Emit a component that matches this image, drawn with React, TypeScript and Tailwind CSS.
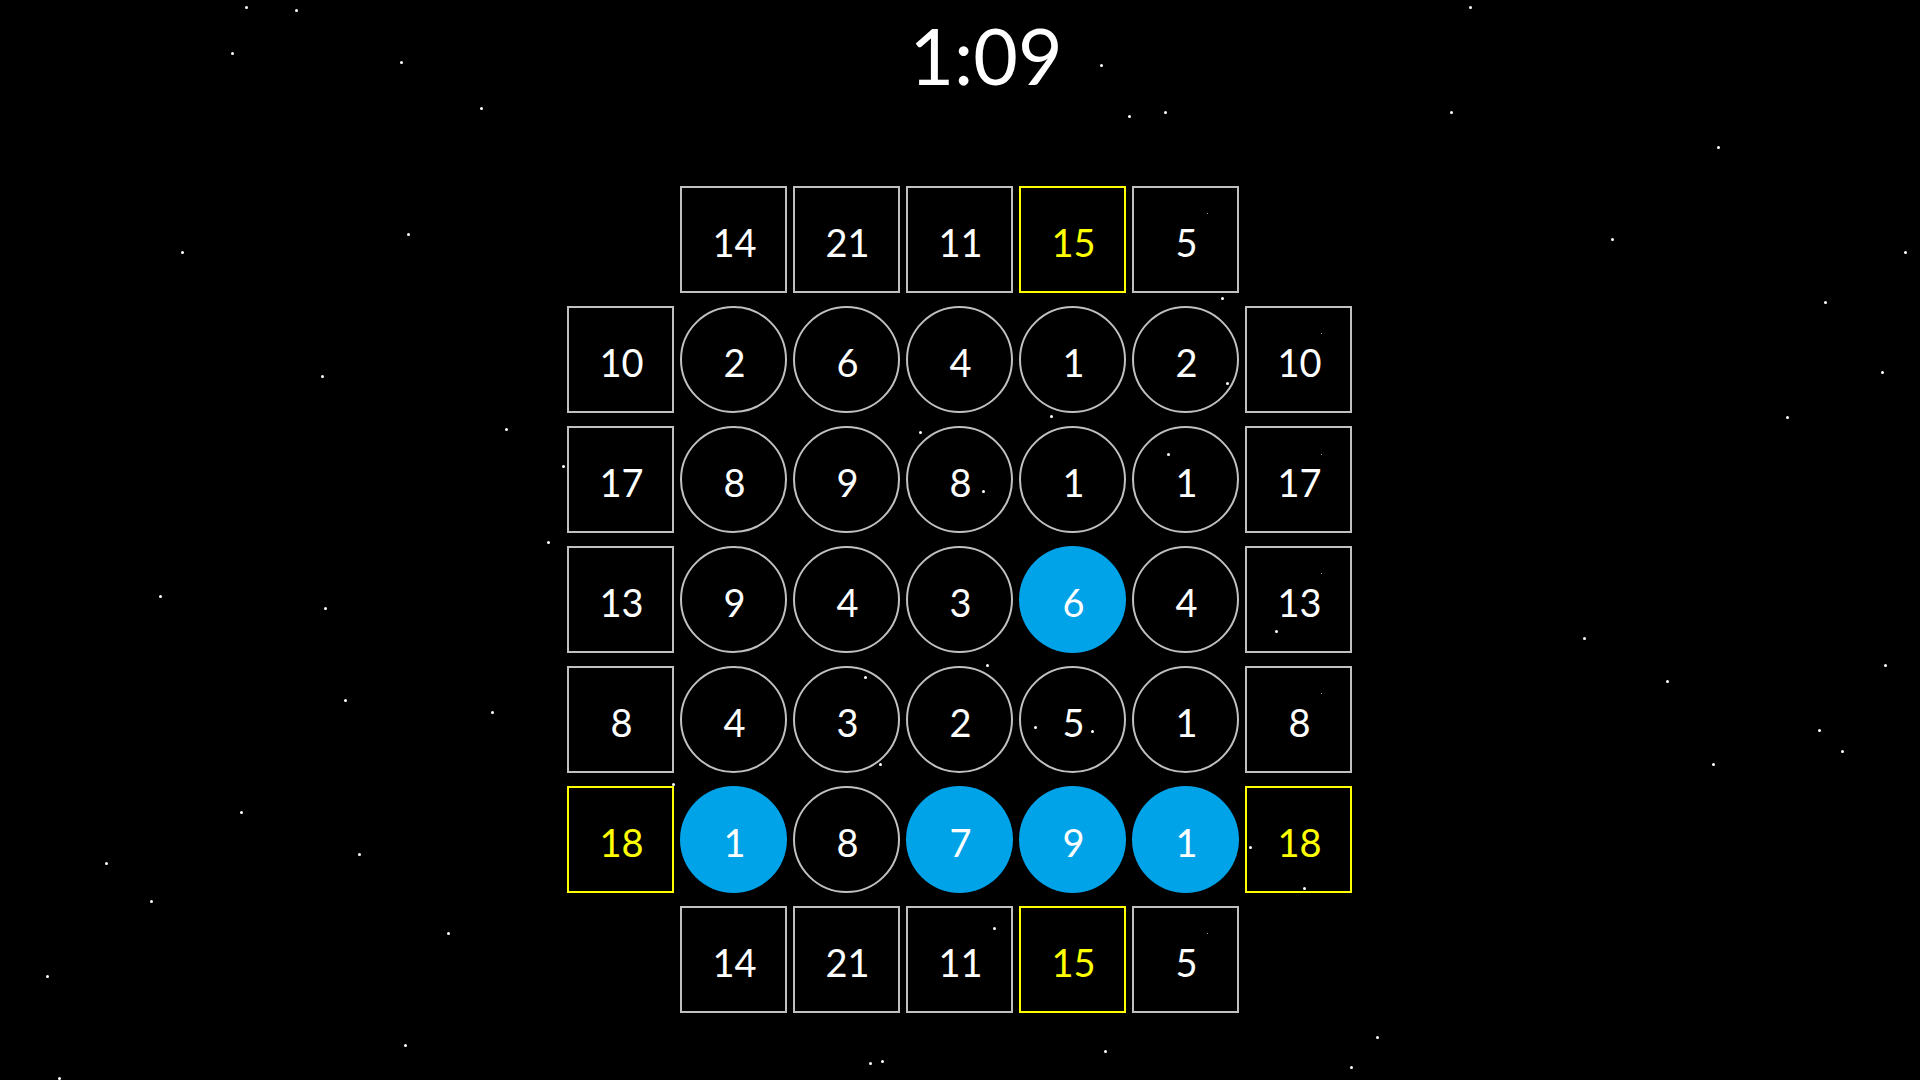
import React from 'react'

type Cell = { v?: number; kind: 'empty' | 'box' | 'ring' | 'filled'; hot?: boolean }

const box = (v: number, hot = false): Cell => ({ v, kind: 'box', hot })
const ring = (v: number): Cell => ({ v, kind: 'ring' })
const fill = (v: number): Cell => ({ v, kind: 'filled' })
const empty: Cell = { kind: 'empty' }

const rows: Cell[][] = [
  [empty, box(14), box(21), box(11), box(15, true), box(5), empty],
  [box(10), ring(2), ring(6), ring(4), ring(1), ring(2), box(10)],
  [box(17), ring(8), ring(9), ring(8), ring(1), ring(1), box(17)],
  [box(13), ring(9), ring(4), ring(3), fill(6), ring(4), box(13)],
  [box(8), ring(4), ring(3), ring(2), ring(5), ring(1), box(8)],
  [box(18, true), fill(1), ring(8), fill(7), fill(9), fill(1), box(18, true)],
  [empty, box(14), box(21), box(11), box(15, true), box(5), empty],
]

// star field, pixel positions on the 1920x1080 canvas
const stars: [number, number][] = [
  [246, 7], [296, 10], [232, 53], [401, 62], [481, 108], [408, 234], [182, 252], [322, 376], [506, 429], [548, 542],
  [160, 596], [325, 608], [345, 700], [492, 712], [241, 812], [106, 863], [151, 901], [359, 854], [448, 933], [47, 976],
  [405, 1045], [59, 1078], [1470, 7], [1451, 112], [1718, 147], [1612, 239], [1905, 252], [1825, 302], [1882, 372],
  [1787, 417], [1584, 638], [1667, 681], [1819, 730], [1842, 751], [1713, 764], [1885, 665], [1377, 1037],
  [1101, 65], [1129, 116], [1165, 112], [1222, 298], [1227, 383], [1051, 416], [920, 432], [983, 491], [1168, 454],
  [563, 466], [1276, 631], [987, 665], [865, 677], [880, 764], [1035, 727], [1092, 731], [673, 784], [1250, 847],
  [1304, 888], [994, 928], [1105, 1051], [870, 1063], [882, 1061], [1351, 1067],
]

const faint: [number, number][] = [
  [1321, 333], [1321, 454], [1207, 213], [1321, 573], [1321, 693], [1207, 933],
]

function GridCell({ cell }: { cell: Cell }) {
  if (cell.kind === 'empty') return <div />
  const base = 'w-[107px] h-[107px] flex items-center justify-center text-[38px] leading-none pt-[4px] pl-[2px]'
  if (cell.kind === 'box') {
    return (
      <div
        className={`${base} bg-black border-2 ${cell.hot ? 'border-[#ffff00] text-[#ffff00]' : 'border-[#c0c0c0] text-white'}`}
      >
        {cell.v}
      </div>
    )
  }
  if (cell.kind === 'ring') {
    return <div className={`${base} rounded-full bg-black border-2 border-[#c0c0c0] text-white`}>{cell.v}</div>
  }
  return <div className={`${base} rounded-full bg-[#00a2e8] text-white`}>{cell.v}</div>
}

export default function App() {
  return (
    <div
      className="relative w-[1920px] h-[1080px] overflow-hidden bg-black"
      style={{ fontFamily: 'Lato, "Open Sans", sans-serif' }}
    >
      <div className="flex flex-col items-center">
        <div className="h-[186px] pt-[17px] pl-[52px]">
          <div className="text-[77px] leading-none text-white">1:09</div>
        </div>

        <div className="grid grid-cols-[repeat(7,107px)] auto-rows-[107px] gap-x-[6px] gap-y-[13px] mr-[1px]">
          {rows.map((row, r) => row.map((cell, c) => <GridCell key={`${r}-${c}`} cell={cell} />))}
        </div>
      </div>

      {/* stars sit on top of everything */}
      <div className="absolute inset-0 pointer-events-none">
        {stars.map(([x, y], i) => (
          <div
            key={i}
            className="absolute w-[3px] h-[3px] rounded-full bg-white"
            style={{ left: x - 1, top: y - 1 }}
          />
        ))}
        {faint.map(([x, y], i) => (
          <div key={`f${i}`} className="absolute w-[1px] h-[1px] bg-[#9a9a9a]" style={{ left: x, top: y }} />
        ))}
      </div>
    </div>
  )
}
